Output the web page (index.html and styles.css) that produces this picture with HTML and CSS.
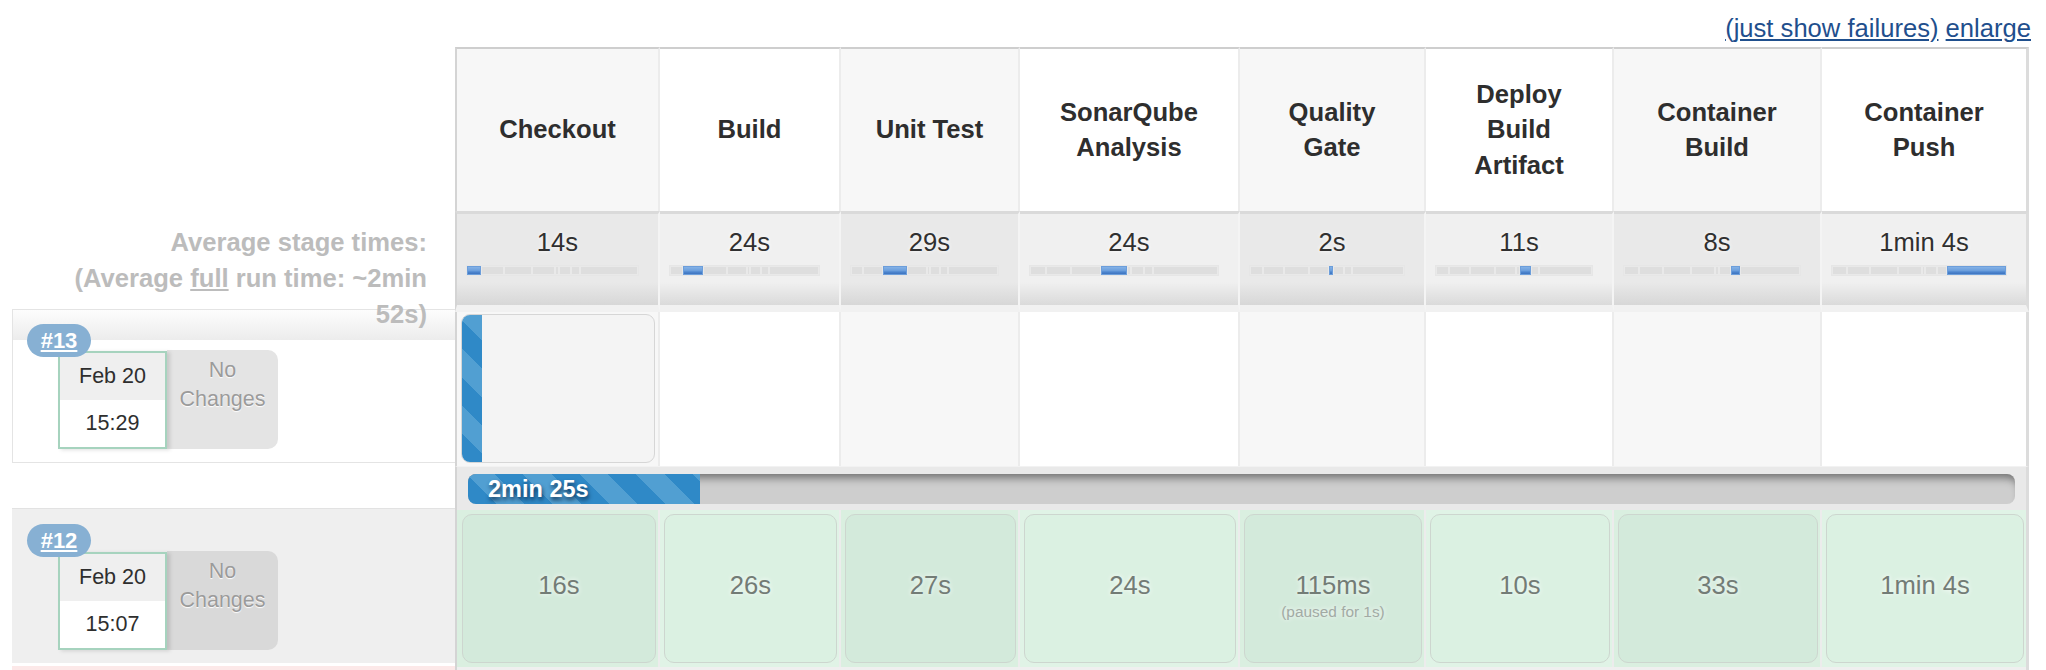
FILE: index.html
```html
<!DOCTYPE html>
<html>
<head>
<meta charset="utf-8">
<title>Stage View</title>
<link rel="stylesheet" href="styles.css">
</head>
<body>
<div class="toplinks"><a href="#">(just show failures)</a> <a href="#">enlarge</a></div>
<div class="grid">
  <div class="corner"></div>
  <div class="s hd odd first">Checkout</div>
  <div class="s hd">Build</div>
  <div class="s hd odd">Unit Test</div>
  <div class="s hd">SonarQube<br>Analysis</div>
  <div class="s hd odd">Quality<br>Gate</div>
  <div class="s hd">Deploy<br>Build<br>Artifact</div>
  <div class="s hd odd">Container<br>Build</div>
  <div class="s hd last">Container<br>Push</div>

  <div class="avg-label">Average stage times:<br>(Average <u>full</u> run time: ~2min<br>52s)</div>
  <div class="s avg odd first"><div class="avg-t">14s</div><div class="mini"><span class="cur" style="flex-grow:14"></span><span style="flex-grow:24"></span><span style="flex-grow:29"></span><span style="flex-grow:24"></span><span style="flex-grow:2"></span><span style="flex-grow:11"></span><span style="flex-grow:8"></span><span style="flex-grow:64"></span></div></div>
  <div class="s avg"><div class="avg-t">24s</div><div class="mini"><span style="flex-grow:14"></span><span class="cur" style="flex-grow:24"></span><span style="flex-grow:29"></span><span style="flex-grow:24"></span><span style="flex-grow:2"></span><span style="flex-grow:11"></span><span style="flex-grow:8"></span><span style="flex-grow:64"></span></div></div>
  <div class="s avg odd"><div class="avg-t">29s</div><div class="mini"><span style="flex-grow:14"></span><span style="flex-grow:24"></span><span class="cur" style="flex-grow:29"></span><span style="flex-grow:24"></span><span style="flex-grow:2"></span><span style="flex-grow:11"></span><span style="flex-grow:8"></span><span style="flex-grow:64"></span></div></div>
  <div class="s avg"><div class="avg-t">24s</div><div class="mini"><span style="flex-grow:14"></span><span style="flex-grow:24"></span><span style="flex-grow:29"></span><span class="cur" style="flex-grow:24"></span><span style="flex-grow:2"></span><span style="flex-grow:11"></span><span style="flex-grow:8"></span><span style="flex-grow:64"></span></div></div>
  <div class="s avg odd"><div class="avg-t">2s</div><div class="mini"><span style="flex-grow:14"></span><span style="flex-grow:24"></span><span style="flex-grow:29"></span><span style="flex-grow:24"></span><span class="cur" style="flex-grow:2"></span><span style="flex-grow:11"></span><span style="flex-grow:8"></span><span style="flex-grow:64"></span></div></div>
  <div class="s avg"><div class="avg-t">11s</div><div class="mini"><span style="flex-grow:14"></span><span style="flex-grow:24"></span><span style="flex-grow:29"></span><span style="flex-grow:24"></span><span style="flex-grow:2"></span><span class="cur" style="flex-grow:11"></span><span style="flex-grow:8"></span><span style="flex-grow:64"></span></div></div>
  <div class="s avg odd"><div class="avg-t">8s</div><div class="mini"><span style="flex-grow:14"></span><span style="flex-grow:24"></span><span style="flex-grow:29"></span><span style="flex-grow:24"></span><span style="flex-grow:2"></span><span style="flex-grow:11"></span><span class="cur" style="flex-grow:8"></span><span style="flex-grow:64"></span></div></div>
  <div class="s avg last"><div class="avg-t">1min 4s</div><div class="mini"><span style="flex-grow:14"></span><span style="flex-grow:24"></span><span style="flex-grow:29"></span><span style="flex-grow:24"></span><span style="flex-grow:2"></span><span style="flex-grow:11"></span><span style="flex-grow:8"></span><span class="cur" style="flex-grow:64"></span></div></div>

  <div class="run-label r13">
    <a class="badge" href="#">#13</a>
    <div class="dates">
      <div class="date"><div class="date-top">Feb 20</div><div class="date-bot">15:29</div></div>
      <div class="nochg">No<br>Changes</div>
    </div>
  </div>
  <div class="s cell odd first"><div class="running"><div class="stripe"></div></div></div>
  <div class="s cell"></div>
  <div class="s cell odd"></div>
  <div class="s cell"></div>
  <div class="s cell odd"></div>
  <div class="s cell"></div>
  <div class="s cell odd"></div>
  <div class="s cell last"></div>

  <div class="prog-left"></div>
  <div class="prog"><div class="pbar"><div class="pfill" style="width:14.97%">2min 25s</div></div></div>

  <div class="run-label r12">
    <a class="badge" href="#">#12</a>
    <div class="dates">
      <div class="date"><div class="date-top">Feb 20</div><div class="date-bot">15:07</div></div>
      <div class="nochg">No<br>Changes</div>
    </div>
  </div>
  <div class="s ok odd first"><div class="sbox">16s</div></div>
  <div class="s ok"><div class="sbox">26s</div></div>
  <div class="s ok odd"><div class="sbox">27s</div></div>
  <div class="s ok"><div class="sbox">24s</div></div>
  <div class="s ok odd"><div class="sbox">115ms<div class="sub">(paused for 1s)</div></div></div>
  <div class="s ok"><div class="sbox">10s</div></div>
  <div class="s ok odd"><div class="sbox">33s</div></div>
  <div class="s ok last"><div class="sbox">1min 4s</div></div>

  <div class="fail-label"></div>
  <div class="next"></div>
</div>
</body>
</html>
```

FILE: styles.css
```css
* { box-sizing: border-box; }
html, body { margin: 0; padding: 0; overflow: hidden; background: #fff; }
body {
  font-family: "Liberation Sans", Arial, Helvetica, sans-serif;
  font-size: 25.6px;
  color: #333;
}

.toplinks {
  height: 47px;
  padding: 13px 15px 0 0;
  text-align: right;
  line-height: 30px;
}
.toplinks a { color: #1f4f8d; text-decoration: underline; }

.grid {
  display: grid;
  grid-template-columns: 455px 205px 181px 179px 220px 186px 188px 208px 207px;
  grid-template-rows: 164px 101px 154px 44px 157px 20px;
}

.s { border-right: 2px solid #ececec; background: #fff; }
.s.odd { background: #f7f7f7; }
.s.first { border-left: 2px solid #d4d4d4; }
.s.last { border-right: 3px solid #dcdcdc; }

/* header */
.hd {
  border-top: 2px solid #cecece;
  display: flex;
  align-items: center;
  justify-content: center;
  text-align: center;
  font-weight: bold;
  line-height: 35.5px;
  color: #2e2e2e;
}

/* averages */
.avg-label {
  padding: 13px 28px 0 0;
  text-align: right;
  font-weight: bold;
  color: #bcbcbc;
  line-height: 36px;
  white-space: nowrap;
  position: relative;
  z-index: 2;
}
.avg-label u { text-decoration: underline; }

.avg {
  border-top: 3px solid #dadada;
  border-bottom: 7px solid #f1f1f1;
  border-right-color: #f4f4f4;
  padding-top: 13px;
  text-align: center;
  background: linear-gradient(#f0f0f0 0, #f0f0f0 75%, #dadada 100%);
}
.avg.odd { background: linear-gradient(#e9e9e9 0, #e9e9e9 75%, #d7d7d7 100%); }
.avg.first { border-left-color: #d4d4d4; }
.avg.last { border-right-color: #dcdcdc; }
.avg-t { line-height: 30px; text-shadow: 0 0 4px #fff; color: #303030; }
.mini {
  display: flex;
  height: 9px;
  margin: 9px 20px 0 10px;
  background: #e2e2e2;
  box-shadow: 0 0 0 1px #e6e6e6;
}
.mini span {
  flex-basis: 0;
  border: 1px solid #e9e9e9;
  border-width: 1px 1px;
  background: #dedede;
}
.mini span.cur {
  background: linear-gradient(#84b2e6 0, #6c9fdd 50%, #4d86cf 72%, #3e74bf 100%);
  border-color: #6c9edb;
}

/* run labels */
.run-label {
  position: relative;
  margin: -3px 0 3px 12px;
  padding: 41px 0 0 45px;
  border: 1px solid #e4e4e4;
  border-right: none;
  background: linear-gradient(#fdfdfd 0, #ececec 30px, #fff 30px);
}
.run-label.r12 {
  margin: -2px 0 4px 12px;
  padding: 43px 0 0 46px;
  border: none;
  border-top: 1px solid #e2e2e2;
  background: #efefef;
}
.badge {
  position: absolute;
  left: 14px;
  top: 14px;
  z-index: 1;
  width: 64px;
  height: 33px;
  border-radius: 17px;
  background: #87b0d3;
  color: #fff;
  font-weight: bold;
  font-size: 22px;
  line-height: 33px;
  text-align: center;
  text-decoration: underline;
}
.r12 .badge { left: 15px; top: 15px; }
.dates { display: flex; align-items: flex-start; }
.date {
  position: relative;
  width: 109px;
  height: 98px;
  border: 2px solid #a6d3be;
  background: #fff;
  box-shadow: 3px 1px 4px rgba(0, 0, 0, 0.13);
  font-size: 21.5px;
  text-align: center;
  color: #2e2e2e;
}
.date-top { height: 47px; line-height: 46px; background: #efefef; }
.date-bot { height: 47px; line-height: 47px; background: #fff; }
.nochg {
  width: 111px;
  height: 99px;
  margin-top: -1px;
  background: #e4e4e4;
  border-radius: 0 10px 10px 0;
  text-align: center;
  color: #9b9b9b;
  font-size: 21.5px;
  line-height: 29px;
  padding-top: 6px;
  text-shadow: 0 1px 1px #fff;
}
.r12 .nochg { background: #d9d9d9; }

/* running row */
.cell.first { padding: 2px 3px 3px 4px; }
.running {
  height: 100%;
  border: 1px solid #d6d6d6;
  border-radius: 9px;
  background: #f4f4f4;
  overflow: hidden;
}
.stripe {
  width: 20px;
  height: 100%;
  background: repeating-linear-gradient(45deg, #2f89c7 0 20px, #519fd2 20px 40px);
}

/* progress row */
.prog {
  grid-column: 2 / 10;
  background: #e9e9e9;
  border-left: 2px solid #d4d4d4;
  border-right: 3px solid #dcdcdc;
  border-top: 1px solid #f2f2f2;
  padding: 7px 11px 0 11px;
}
.pbar {
  display: flex;
  height: 30px;
  border-radius: 8px;
  background: #cecece;
  box-shadow: inset 0 9px 9px -5px rgba(0, 0, 0, 0.45);
  overflow: hidden;
}
.pfill {
  height: 100%;
  padding-left: 20px;
  background: repeating-linear-gradient(45deg, #2f89c7 0 20px, #519fd2 20px 40px);
  color: #fff;
  font-weight: bold;
  font-size: 23.5px;
  line-height: 30px;
  white-space: nowrap;
  text-shadow: 1px 3px 4px rgba(0, 25, 55, 0.75);
}

/* success row */
.ok { padding: 4px 2px 4px 4px; background: #e0f3e6; }
.ok.odd { background: #daefe0; }
.ok.first { padding-left: 5px; }
.sbox {
  height: 100%;
  border: 1px solid #cdd6cf;
  border-radius: 10px;
  background: #dbf1e2;
  text-align: center;
  padding-top: 55px;
  color: #737c76;
  line-height: 30px;
  text-shadow: 0 0 5px #fff;
}
.ok.odd .sbox { background: #d3eadb; }
.sub {
  margin-top: 2px;
  font-size: 15.4px;
  line-height: 20px;
  color: #a2aaa4;
}

/* next (failed) row, cut off */
.fail-label { margin: -1px 0 0 12px; background: #fce8e8; }
.next {
  grid-column: 2 / 10;
  background: #efefef;
  border-left: 2px solid #d4d4d4;
  border-right: 3px solid #dcdcdc;
}
```
